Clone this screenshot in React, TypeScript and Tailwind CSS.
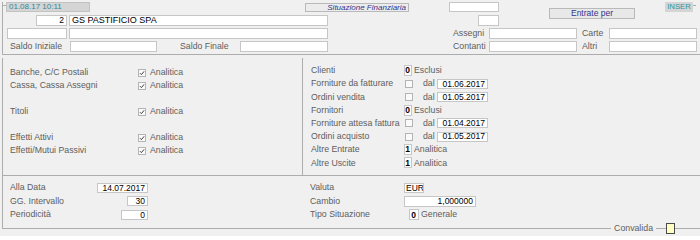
type FieldProps = { className?: string; value?: string; right?: boolean; bold?: boolean };

function Field({ className = "", value = "", right = false, bold = false }: FieldProps) {
  return (
    <div
      className={`flex shrink-0 items-center overflow-hidden whitespace-nowrap border border-[#c6c6c6] bg-white px-[2px] text-[8.5px] leading-none text-black ${
        right ? "justify-end" : ""
      } ${bold ? "font-bold" : ""} ${className}`}
    >
      {value}
    </div>
  );
}

function Check({ checked = false }: { checked?: boolean }) {
  return (
    <div className="flex h-[8px] w-[8px] shrink-0 items-center justify-center border border-[#b4b4b4] bg-[#fafafa]">
      {checked && (
        <svg viewBox="0 0 8 8" className="h-[6px] w-[6px]">
          <path d="M1.2 4.2 L3.2 6.2 L6.8 1.8" stroke="#3a3a3a" strokeWidth="1.3" fill="none" />
        </svg>
      )}
    </div>
  );
}

const leftChecks = [
  { label: "Banche, C/C Postali", gapAfter: false },
  { label: "Cassa, Cassa Assegni", gapAfter: true },
  { label: "Titoli", gapAfter: true },
  { label: "Effetti Attivi", gapAfter: false },
  { label: "Effetti/Mutui Passivi", gapAfter: false },
];

type RightRow =
  | { label: string; kind: "box"; value: string; text: string }
  | { label: string; kind: "date"; date: string };

const rightRows: RightRow[] = [
  { label: "Clienti", kind: "box", value: "0", text: "Esclusi" },
  { label: "Forniture da fatturare", kind: "date", date: "01.06.2017" },
  { label: "Ordini vendita", kind: "date", date: "01.05.2017" },
  { label: "Fornitori", kind: "box", value: "0", text: "Esclusi" },
  { label: "Forniture attesa fattura", kind: "date", date: "01.04.2017" },
  { label: "Ordini acquisto", kind: "date", date: "01.05.2017" },
  { label: "Altre Entrate", kind: "box", value: "1", text: "Analitica" },
  { label: "Altre Uscite", kind: "box", value: "1", text: "Analitica" },
];

export default function App() {
  return (
    <div className="h-[236px] w-[700px] overflow-hidden bg-[#f0f0f0] font-['Liberation_Sans',Arial,sans-serif] text-[8.75px] leading-none text-[#5e5e5e]">
      {/* testata */}
      <div className="h-[58px] pl-[2px] pt-[5px]">
        <div className="h-[53px] border-b border-l border-[#adadad]">
          <div className="-mt-[3px] flex flex-col gap-[2px]">
            <div className="flex h-[11px] items-start">
              <div className="mt-[3px] h-px w-[3px] bg-[#adadad]" />
              <div className="flex h-[10px] w-[84px] items-center border border-[#c2c2c2] bg-[#d5d5d5] pl-[2px] text-[8px] text-[#2f8796]">
                01.08.17 10:11
              </div>
              <div className="ml-[215px] mt-[1px] flex h-[9px] w-[104px] items-center justify-end border border-[#b9b9b9] bg-[#ececec] pr-[2px] text-[8px] italic text-[#34348c]">
                Situazione Finanziaria
              </div>
              <Field className="ml-[40px] h-[10px] w-[50px]" />
              <div className="ml-[50px] mt-[6px] flex h-[11px] w-[86px] items-center justify-center border border-[#b9b9b9] bg-[#e8e8e8] text-[8.5px] text-[#34348c]">
                Entrate per
              </div>
              <div className="ml-[30px] flex h-[10px] w-[28px] items-center justify-center bg-[#d5d5d5] text-[7.75px] text-[#2f95a3]">
                INSER
              </div>
              <div className="mt-[3px] h-px w-[3px] bg-[#adadad]" />
            </div>

            <div className="flex h-[11px] items-center">
              <Field className="ml-[33px] h-[11px] w-[31px]" value="2" right />
              <Field className="ml-[2px] h-[11px] w-[259px] !text-[9px]" value="GS PASTIFICIO SPA" />
              <Field className="ml-[150px] h-[11px] w-[21px]" />
            </div>

            <div className="flex h-[11px] items-center">
              <Field className="ml-[4px] h-[11px] w-[60px]" />
              <Field className="ml-[2px] h-[11px] w-[259px]" />
              <span className="ml-[125px] w-[36px]">Assegni</span>
              <Field className="h-[11px] w-[88px]" />
              <span className="ml-[5px] w-[27px]">Carte</span>
              <Field className="h-[11px] w-[88px]" />
            </div>

            <div className="flex h-[11px] items-center">
              <span className="ml-[7px] w-[60px]">Saldo Iniziale</span>
              <Field className="h-[11px] w-[87px]" />
              <span className="ml-[23px] w-[60px]">Saldo Finale</span>
              <Field className="h-[11px] w-[88px]" />
              <span className="ml-[125px] w-[36px]">Contanti</span>
              <Field className="h-[11px] w-[88px]" />
              <span className="ml-[5px] w-[27px]">Altri</span>
              <Field className="h-[11px] w-[88px]" />
            </div>
          </div>
        </div>
      </div>

      {/* filtri */}
      <div className="ml-[2px] flex h-[118px] border-b border-l border-[#adadad]">
        <div className="w-[300px] border-r border-[#adadad] pl-[7px] pt-[8px]">
          {leftChecks.map((row) => (
            <div key={row.label} className={row.gapAfter ? "pb-[13px]" : ""}>
              <div className="flex h-[13px] items-center">
                <span className="w-[128px]">{row.label}</span>
                <Check checked />
                <span className="ml-[4px]">Analitica</span>
              </div>
            </div>
          ))}
        </div>

        <div className="flex-1 pl-[8px] pt-[6px]">
          {rightRows.map((row) => (
            <div key={row.label} className="flex h-[13.2px] items-center">
              <span className="w-[93px] whitespace-nowrap">{row.label}</span>
              {row.kind === "box" ? (
                <>
                  <Field className="h-[11px] w-[8px] !px-0 !pr-px" value={row.value} right bold />
                  <span className="ml-[2px]">{row.text}</span>
                </>
              ) : (
                <>
                  <div className="ml-[1px]">
                    <Check />
                  </div>
                  <span className="ml-[10px] w-[14px]">dal</span>
                  <Field className="h-[10px] w-[51px]" value={row.date} right />
                </>
              )}
            </div>
          ))}
        </div>
      </div>

      {/* parametri */}
      <div className="ml-[2px] flex h-[52px] border-l border-[#adadad] pt-[5px]">
        <div className="w-[299px]">
          <div className="w-[145px]">
            <div className="flex h-[13.5px] items-center justify-between pl-[7px]">
              <span>Alla Data</span>
              <Field className="h-[10px] w-[51px]" value="14.07.2017" right />
            </div>
            <div className="flex h-[13.5px] items-center justify-between pl-[7px]">
              <span>GG. Intervallo</span>
              <Field className="h-[10px] w-[21px]" value="30" right />
            </div>
            <div className="flex h-[13.5px] items-center justify-between pl-[7px]">
              <span>Periodicità</span>
              <Field className="h-[10px] w-[27px]" value="0" right />
            </div>
          </div>
        </div>
        <div className="flex-1 pl-[8px]">
          <div className="flex h-[13.5px] items-center">
            <span className="w-[94px]">Valuta</span>
            <Field className="h-[10px] w-[20px] !px-px" value="EUR" />
          </div>
          <div className="flex h-[13.5px] items-center">
            <span className="w-[94px]">Cambio</span>
            <Field className="h-[11px] w-[72px]" value="1,000000" right />
          </div>
          <div className="flex h-[13.5px] items-center">
            <span className="w-[94px]">Tipo Situazione</span>
            <Field className="ml-[5px] h-[11px] w-[10px]" value="0" right bold />
            <span className="ml-[2px]">Generale</span>
          </div>
        </div>
      </div>

      <div className="-mt-[5px] ml-[2px] flex h-[11px] items-center">
        <div className="h-px flex-1 bg-[#adadad]" />
        <span className="px-[3px]">Convalida</span>
        <div className="h-px w-[10px] bg-[#adadad]" />
        <div className="h-[11px] w-[9px] border border-[#4a4a4a] bg-[#ffffc4]" />
        <div className="h-px w-[25px] bg-[#adadad]" />
      </div>
    </div>
  );
}
